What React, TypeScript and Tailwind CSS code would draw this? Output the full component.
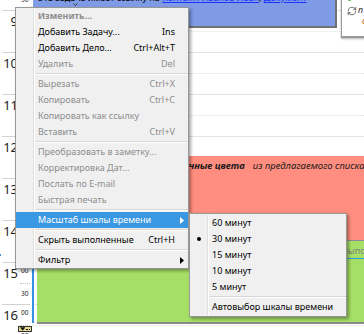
import { RefreshCw } from "lucide-react";

type MenuItem =
  | {
      kind: "item";
      label: string;
      shortcut?: string;
      disabled?: boolean;
      bold?: boolean;
      sub?: boolean;
      active?: boolean;
      checked?: boolean;
    }
  | { kind: "sep" };

const mainMenu: MenuItem[] = [
  { kind: "item", label: "Изменить...", disabled: true, bold: true },
  { kind: "item", label: "Добавить Задачу...", shortcut: "Ins" },
  { kind: "item", label: "Добавить Дело...", shortcut: "Ctrl+Alt+T" },
  { kind: "item", label: "Удалить", shortcut: "Del", disabled: true },
  { kind: "sep" },
  { kind: "item", label: "Вырезать", shortcut: "Ctrl+X", disabled: true },
  { kind: "item", label: "Копировать", shortcut: "Ctrl+C", disabled: true },
  { kind: "item", label: "Копировать как ссылку", disabled: true },
  { kind: "item", label: "Вставить", shortcut: "Ctrl+V", disabled: true },
  { kind: "sep" },
  { kind: "item", label: "Преобразовать в заметку...", disabled: true },
  { kind: "item", label: "Корректировка Дат...", disabled: true },
  { kind: "item", label: "Послать по E-mail", disabled: true },
  { kind: "item", label: "Быстрая печать", disabled: true },
  { kind: "sep" },
  { kind: "item", label: "Масштаб шкалы времени", sub: true, active: true },
  { kind: "sep" },
  { kind: "item", label: "Скрыть выполненные", shortcut: "Ctrl+H" },
  { kind: "sep" },
  { kind: "item", label: "Фильтр", sub: true },
];

const scaleMenu: MenuItem[] = [
  { kind: "item", label: "60 минут" },
  { kind: "item", label: "30 минут", checked: true },
  { kind: "item", label: "15 минут" },
  { kind: "item", label: "10 минут" },
  { kind: "item", label: "5 минут" },
  { kind: "sep" },
  { kind: "item", label: "Автовыбор шкалы времени" },
];

const hours = [8, 9, 10, 11, 12, 13, 14, 15, 16];

function Arrow({ white }: { white?: boolean }) {
  return (
    <svg width="4" height="7" viewBox="0 0 4 7">
      <path d="M0 0 L4 3.5 L0 7 Z" fill={white ? "#ffffff" : "#000000"} />
    </svg>
  );
}

function MenuRow({ item }: { item: MenuItem }) {
  if (item.kind === "sep") {
    return (
      <div className="flex h-[4px]">
        <div className="w-[18px] shrink-0 border-r border-[#e0e0e0] shadow-[1px_0_0_#ffffff]" />
        <div className="flex flex-1 flex-col justify-center pl-[2px]">
          <div className="h-px w-full bg-[#d5d5d5]" />
          <div className="h-px w-full bg-[#ffffff]" />
        </div>
      </div>
    );
  }

  const color = item.active
    ? "text-white"
    : item.disabled
      ? "text-[#8d8d8d]"
      : "text-black";

  return (
    <div className={`flex h-[16px] items-center ${item.active ? "bg-[#3a97e2]" : ""} ${color}`}>
      <div
        className={`flex h-full w-[18px] shrink-0 items-center justify-center border-r ${
          item.active ? "border-transparent" : "border-[#e0e0e0] shadow-[1px_0_0_#ffffff]"
        }`}
      >
        {item.checked && <div className="h-[4px] w-[4px] rounded-full bg-black" />}
      </div>
      <div className={`flex-1 whitespace-nowrap pl-[4px] ${item.bold ? "font-bold" : ""}`}>
        {item.label}
      </div>
      {item.shortcut && <div className="whitespace-nowrap">{item.shortcut}</div>}
      <div className="flex w-[13px] shrink-0 justify-end pr-[4px]">
        {item.sub && <Arrow white={item.active} />}
      </div>
    </div>
  );
}

function HourLabel({ h }: { h: number }) {
  return (
    <div className="h-[42px] px-[2px] text-[#222222]">
      <div className="border-t border-[#d2d2d2]" />
      <div className="flex h-[20px]">
        <span className="mt-[4px] w-[16px] text-right text-[13px] leading-[13px]">{h}</span>
        <span className="ml-[3px] mt-[4px] text-[6.5px] leading-[7px]">00</span>
      </div>
      <div className="ml-[18px] border-t border-dotted border-[#c4c4c4]" />
      <div className="ml-[19px] mt-[6px] text-[6.5px] leading-[7px]">30</div>
    </div>
  );
}

function DayColumn() {
  return (
    <div className="relative flex-1">
      <div className="-mt-[32px]">
        {hours.map((h) => (
          <div key={h} className="h-[42px] border-t border-[#e2e2e2]">
            <div className="mt-[20px] border-t border-dotted border-[#e2e2e2]" />
          </div>
        ))}
      </div>

      {/* задача со ссылками */}
      <div className="absolute left-[1px] top-[-20px] h-[48px] w-[304px] border-b-2 border-r-2 border-[#737373] bg-[#7f9be6] pl-[5px] pt-[12px] text-[9px] leading-[12px] text-black">
        <div className="whitespace-nowrap">
          Эта задача имеет ссылку на{" "}
          <span className="text-[#1a34ff] underline">Контакт: Иванов Иван</span>,{" "}
          <span className="text-[#1a34ff] underline">Документ</span>
        </div>
        <svg className="absolute left-[40px] top-[23px]" width="5" height="3" viewBox="0 0 5 3">
          <path d="M0.5 0.5 L2.5 2.5 L4.5 0.5" stroke="#333333" strokeWidth="1" fill="none" />
        </svg>
      </div>

      {/* заметка справа */}
      <div className="absolute left-[309px] top-[-12px] h-[50px] w-[40px] border-b-2 border-l border-[#9a9a9a] bg-white shadow-[0_1px_2px_rgba(0,0,0,0.3)]">
        <div className="absolute left-[6px] top-[10px] h-[3px] w-[3px] rounded-full bg-[#36b336]" />
        <RefreshCw className="absolute left-[5px] top-[18px] text-[#333333]" size={10} strokeWidth={1.6} />
        <div className="absolute left-[16px] top-[17px] text-[9px] italic leading-[10px] text-[#222222]">п</div>
        <div className="absolute left-[20px] top-[28px] text-[9px] italic leading-[10px] text-[#c06010]">с</div>
      </div>

      {/* красное событие */}
      <div className="absolute left-[5px] right-[-10px] top-[156px] h-[84px] bg-[#ff8e80] pt-[4px] text-[9.5px] italic leading-[12px] text-[#1a1a1a]">
        <div className="flex whitespace-nowrap">
          <span className="w-[146px] shrink-0 overflow-hidden text-right font-bold">Можно выбрать разл</span>
          <span className="font-bold">ичные цвета</span>
          <span className="ml-[8px]">из предлагаемого списка</span>
        </div>
      </div>

      {/* зелёное событие */}
      <div className="absolute left-[5px] right-[-10px] top-[240px] h-[84px] border-b-2 border-t border-b-[#8a8a8a] border-t-[#8f8f8f] bg-[#a6df66]">
        <div className="absolute left-[305px] right-0 top-[4px] border-b border-[#2b9be3] pb-[2px] text-[9px] leading-[11px] text-[#7d7d7d]">
          Выполнено
        </div>
      </div>
    </div>
  );
}

export default function App() {
  return (
    <div className="relative h-[334px] w-[364px] overflow-hidden bg-white font-['Noto_Sans',sans-serif] text-[9px] select-none">
      <div className="flex h-full">
        <div className="relative w-[32px] shrink-0">
          <div className="-mt-[32px]">
            {hours.map((h) => (
              <HourLabel key={h} h={h} />
            ))}
          </div>
        </div>
        <DayColumn />
      </div>

      {/* выделенный интервал */}
      <div className="absolute left-[32px] top-[222px] h-[101px] w-[2px] bg-[#3592e0]" />
      <div className="absolute left-0 top-[254px] h-[2px] w-[1px] bg-[#3b8fe0]" />

      {/* кнопка прокрутки */}
      <div className="absolute left-[18px] top-[326px] flex h-[6px] w-[14px] items-center gap-[1px] border border-[#333333] bg-[#e6d890] px-[1px]">
        <svg width="6" height="4" viewBox="0 0 6 4">
          <path d="M0 0 L6 0 L3 4 Z" fill="#111111" />
        </svg>
        <div className="h-px w-[4px] border-t border-dotted border-[#111111]" />
      </div>

      {/* контекстное меню */}
      <div className="absolute left-[15px] top-[7px] w-[174px] border border-[#979797] bg-[#f0f0f0] shadow-[2px_2px_3px_rgba(0,0,0,0.35)]">
        {mainMenu.map((item, i) => (
          <MenuRow key={i} item={item} />
        ))}
      </div>

      {/* подменю масштаба */}
      <div className="absolute left-[189px] top-[213px] w-[158px] border border-[#979797] bg-[#f0f0f0] py-[1px] shadow-[2px_2px_3px_rgba(0,0,0,0.35)]">
        {scaleMenu.map((item, i) => (
          <MenuRow key={i} item={item} />
        ))}
      </div>
    </div>
  );
}
